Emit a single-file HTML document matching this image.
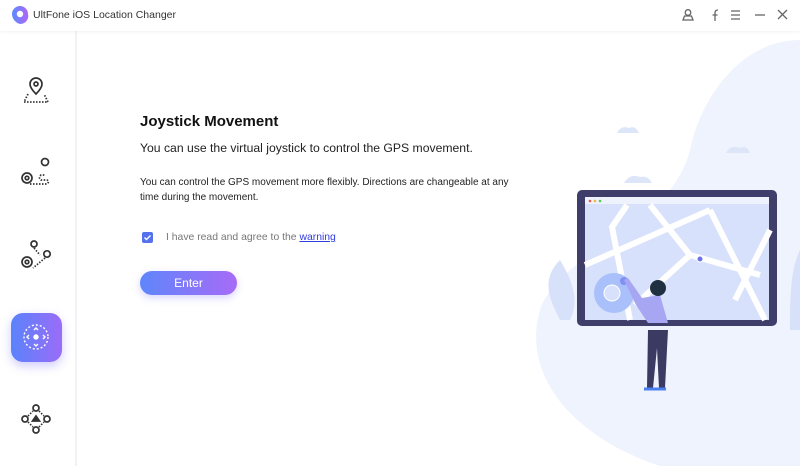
<!DOCTYPE html>
<html><head><style>
*{margin:0;padding:0;box-sizing:border-box}
body{width:800px;height:466px;overflow:hidden;background:#fff;font-family:"Liberation Sans",sans-serif;position:relative}
.hdr{position:absolute;left:0;top:0;width:800px;height:31px;background:#fff;box-shadow:0 1px 3px rgba(0,0,0,.06);z-index:3}
.side{position:absolute;left:0;top:31px;width:77px;height:435px;border-right:2px solid #f1f2f5;background:#fff}
.t{position:absolute;color:#222;white-space:nowrap}
</style></head><body>
<div class="hdr">
<svg style="position:absolute;left:10px;top:5px" width="20" height="20" viewBox="0 0 20 20"><defs><linearGradient id="g1" x1="0" x2="1"><stop offset="0" stop-color="#5a8cff"/><stop offset="1" stop-color="#b066f5"/></linearGradient></defs><path d="M10 1a8 8 0 0 0-8 8c0 5 4 9 8 10a8 8 0 0 0 8-10 8 8 0 0 0-8-8z" fill="url(#g1)"/><circle cx="10" cy="9" r="3.2" fill="#fff"/></svg>
<div class="t" style="left:33px;top:9px;font-size:10.5px;color:#333">UltFone iOS Location Changer</div>
<svg style="position:absolute;left:680px;top:8px" width="110" height="14" viewBox="0 0 110 14" fill="none" stroke="#666" stroke-width="1.3"><circle cx="8" cy="4.5" r="2.8"/><path d="M3 12h10l-1.5-4h-7z"/><path d="M35 13V5q0-3 3-3M32.5 7h5"/><path d="M51 3h9M51 7h9M51 11h9"/><path d="M75 7h10"/><path d="M98 2l9 9M107 2l-9 9"/></svg>
</div>
<div class="side">
<svg style="position:absolute;left:20px;top:45px" width="32" height="30" viewBox="0 0 32 30" fill="none" stroke="#333" stroke-width="1.7"><path d="M16 18c-4-4-6-7-6-10a6 6 0 0 1 12 0c0 3-2 6-6 10z"/><circle cx="16" cy="8" r="2"/><path d="M8 18L4 26h24l-4-8" stroke-dasharray="1.5 1.5"/></svg>
<svg style="position:absolute;left:18px;top:125px" width="36" height="32" viewBox="0 0 36 32" fill="none" stroke="#333" stroke-width="1.7"><circle cx="9" cy="22" r="5"/><circle cx="9" cy="22" r="1.8"/><circle cx="27" cy="6" r="3.5"/><path d="M12 28h17q3-3 0-4h-6q-3-2 0-5h4" stroke-dasharray="1.5 1.5"/></svg>
<svg style="position:absolute;left:18px;top:207px" width="36" height="34" viewBox="0 0 36 34" fill="none" stroke="#333" stroke-width="1.7"><circle cx="9" cy="24" r="5"/><circle cx="9" cy="24" r="1.8"/><circle cx="16" cy="6" r="3"/><circle cx="29" cy="16" r="3.2"/><path d="M16 10l6 7M27 20l-12 10" stroke-dasharray="1.5 1.5"/></svg>
<div style="position:absolute;left:11px;top:282px;width:51px;height:49px;border-radius:12px;background:linear-gradient(90deg,#5a83fb,#9a6cf8);box-shadow:0 4px 10px rgba(120,110,250,.35)"></div>
<svg style="position:absolute;left:20px;top:289px" width="32" height="34" viewBox="0 0 32 34" fill="none" stroke="#fff" stroke-width="1.4"><circle cx="16" cy="17" r="12" stroke-dasharray="2 2"/><circle cx="16" cy="17" r="2" fill="#fff"/><path d="M14 10l2-2 2 2M14 24l2 2 2-2M9 15l-2 2 2 2M23 15l2 2-2 2"/></svg>
<svg style="position:absolute;left:20px;top:372px" width="32" height="32" viewBox="0 0 32 32" fill="none" stroke="#333" stroke-width="1.7"><circle cx="16" cy="5" r="3"/><circle cx="16" cy="27" r="3"/><circle cx="5" cy="16" r="3"/><circle cx="27" cy="16" r="3"/><path d="M8 13l5-5M19 8l5 5M8 19l5 5M19 24l5-5" stroke-dasharray="1.5 1.5"/><path d="M12.5 18l3.5-5 3.5 5z" fill="#333"/></svg>
</div>
<svg style="position:absolute;left:510px;top:31px" width="290" height="435" viewBox="510 31 290 435">
<path d="M800 40C740 40 700 100 690 150 670 230 560 250 540 310 520 380 580 440 660 466H800z" fill="#eff3fd"/>
<path d="M617 133q4-8 12-5 6-3 10 5z" fill="#dde5f9"/><path d="M726 153q5-9 14-5 7-3 10 5z" fill="#dde5f9"/><path d="M624 183q6-10 16-6 8-2 12 6z" fill="#dde5f9"/>
<path d="M560 320c-10-20-20-40 0-60 12 20 20 40 10 60z" fill="#d8e1fa"/>
<path d="M790 330c0-30 0-60 10-80v80z" fill="#d8e1fa"/>
<rect x="577" y="190" width="200" height="136" rx="5" fill="#3f3e6b"/>
<rect x="585" y="197" width="184" height="123" fill="#d7e1fb"/>
<rect x="585" y="197" width="184" height="7" fill="#eef2fd"/>
<circle cx="590" cy="201" r="1.3" fill="#e55"/><circle cx="595" cy="201" r="1.3" fill="#eb3"/><circle cx="600" cy="201" r="1.3" fill="#5c5"/>
<g stroke="#fff" stroke-width="6" fill="none"><path d="M627 205l-15 22 18 93"/><path d="M585 265L710 210"/><path d="M650 205l40 50 70 20"/><path d="M710 210l55 110"/><path d="M690 255l-55 50"/><path d="M735 300l35-70"/></g>
<circle cx="614" cy="293" r="20" fill="#a9c0fa"/><circle cx="612" cy="293" r="8" fill="#d7e1fb" stroke="#fff"/><circle cx="624" cy="281" r="4" fill="#7f8ff3"/>
<circle cx="700" cy="259" r="3" fill="#6a73e8" stroke="#fff"/>
<path d="M636 305l-12-25 4-2 14 20 18-3 8 28h-20z" fill="#a6a6f2"/>
<path d="M648 330h20l-3 58h-6l-2-40-4 40h-6z" fill="#3a3a62"/>
<circle cx="658" cy="288" r="8" fill="#1f3040"/>
<path d="M644 389h12M655 389h11" stroke="#4a7ff0" stroke-width="3"/>
</svg>
<div class="t" style="left:140px;top:113px;font-size:15px;font-weight:bold;color:#111">Joystick Movement</div>
<div class="t" style="left:140px;top:141px;font-size:12.2px">You can use the virtual joystick to control the GPS movement.</div>
<div class="t" style="left:140px;top:176px;font-size:10px;line-height:14.5px;white-space:normal;width:380px">You can control the GPS movement more flexibly. Directions are changeable at any time during the movement.</div>
<div style="position:absolute;left:142px;top:232px;width:11px;height:11px;border-radius:2px;background:#5671ec"><svg width="11" height="11" viewBox="0 0 11 11" style="position:absolute"><path d="M2.5 5.5l2 2 4-4" stroke="#fff" stroke-width="1.4" fill="none"/></svg></div>
<div class="t" style="left:166px;top:232px;font-size:10.4px;color:#777">I have read and agree to the <span style="color:#2f3cdf;text-decoration:underline">warning</span></div>
<div style="position:absolute;left:140px;top:271px;width:97px;height:24px;border-radius:12px;background:linear-gradient(90deg,#5f86fb,#a76bf7);color:#fff;font-size:12px;text-align:center;line-height:24px;box-shadow:0 3px 8px rgba(130,120,250,.3)">Enter</div>
</body></html>
